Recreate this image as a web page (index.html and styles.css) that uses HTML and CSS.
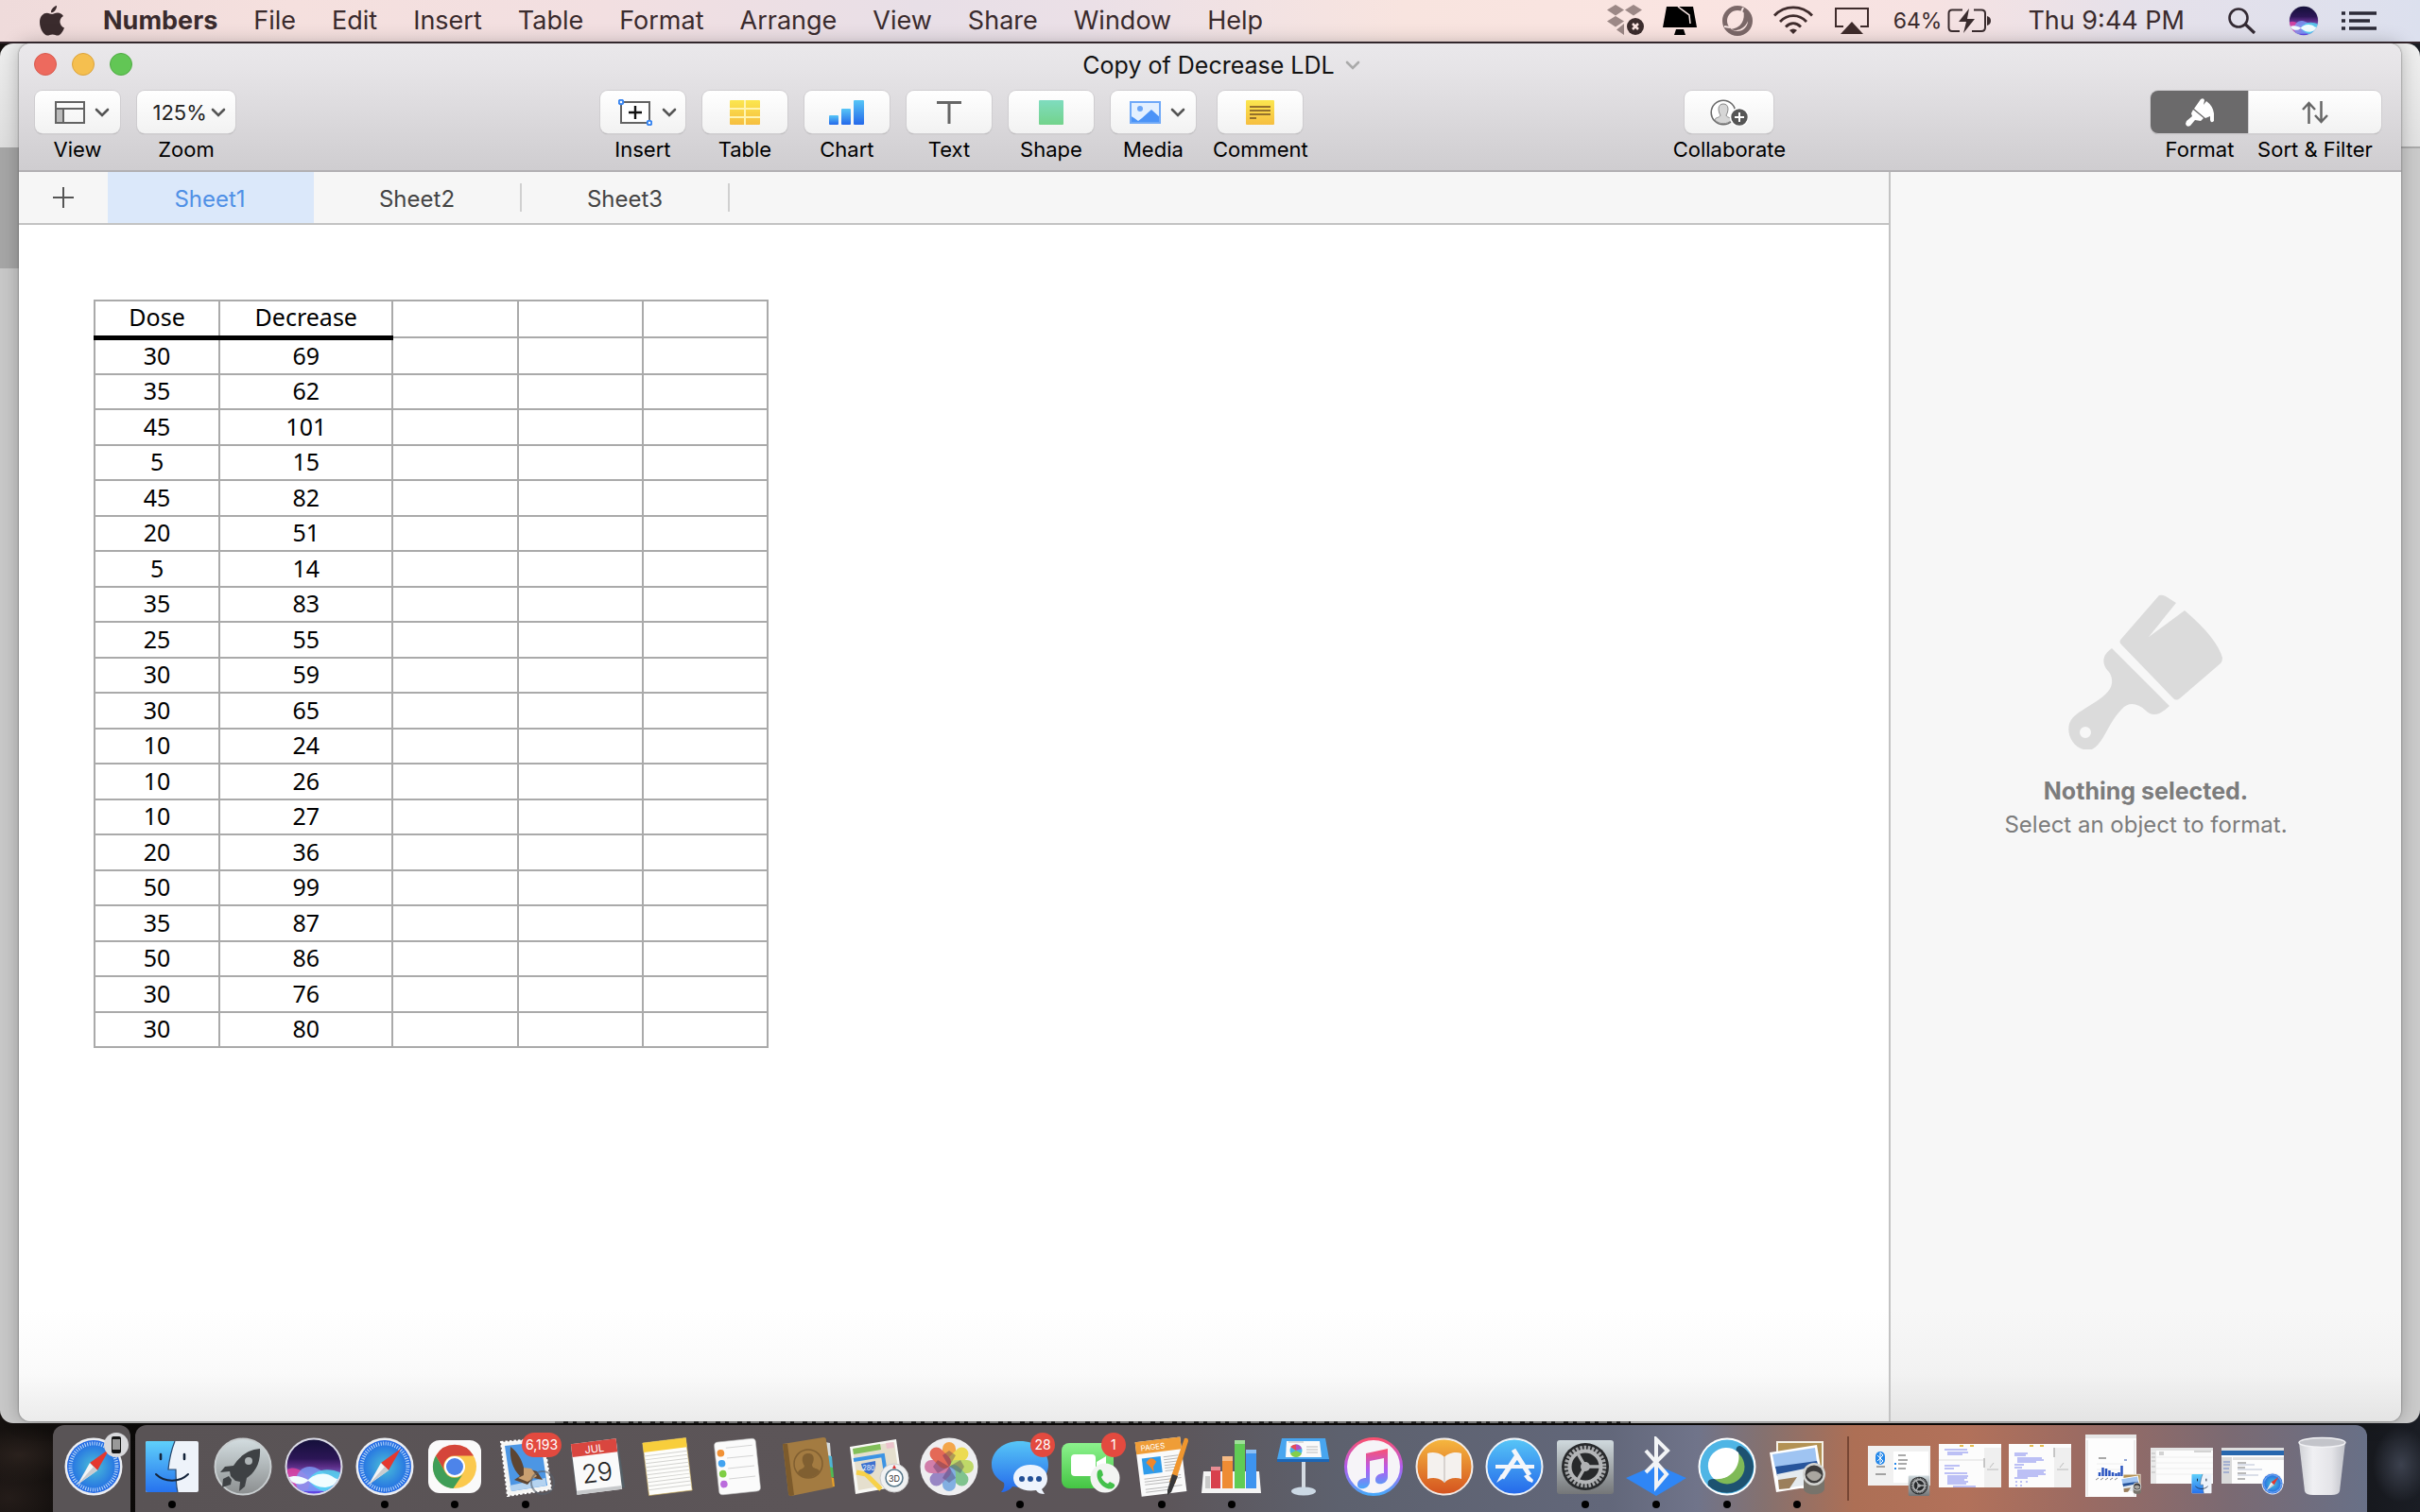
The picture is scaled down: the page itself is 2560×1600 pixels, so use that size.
FILE: index.html
```html
<!DOCTYPE html>
<html lang="en">
<head>
<meta charset="utf-8">
<title>Copy of Decrease LDL</title>
<link rel="stylesheet" href="styles.css">
</head>
<body>
<svg class="defs" aria-hidden="true">
  <defs>
    <linearGradient id="gBlue" x2="0" y2="1"><stop stop-color="#57c6f7"/><stop offset="1" stop-color="#2468ea"/></linearGradient>
    <linearGradient id="gOrange" x2="0" y2="1"><stop stop-color="#f6b83f"/><stop offset="1" stop-color="#d4521f"/></linearGradient>
    <linearGradient id="gYellow" x2="0" y2="1"><stop stop-color="#fbe64f"/><stop offset="1" stop-color="#f6be40"/></linearGradient>
    <linearGradient id="gGreen" x2="0" y2="1"><stop stop-color="#8cf28d"/><stop offset="1" stop-color="#45c544"/></linearGradient>
    <linearGradient id="gShape" x2="0" y2="1"><stop stop-color="#7fdcbf"/><stop offset="1" stop-color="#73d38b"/></linearGradient>
    <linearGradient id="gSilver" x2="0" y2="1"><stop stop-color="#d3dde0"/><stop offset="1" stop-color="#8b8e8f"/></linearGradient>
    <linearGradient id="gMetal" x2="0" y2="1"><stop stop-color="#d0dade"/><stop offset="1" stop-color="#747678"/></linearGradient>
    <linearGradient id="gFinder" x2="0" y2="1"><stop stop-color="#5fd0fa"/><stop offset="1" stop-color="#2672ee"/></linearGradient>
    <linearGradient id="gNote" x2="0" y2="1"><stop stop-color="#fa5070"/><stop offset=".5" stop-color="#b45cf0"/><stop offset="1" stop-color="#48a8fa"/></linearGradient>
    <linearGradient id="gTrash" x2="1" y2="0"><stop stop-color="#d0d1d6"/><stop offset=".3" stop-color="#f0f0f3"/><stop offset=".7" stop-color="#e4e4e8"/><stop offset="1" stop-color="#bfc1c8"/></linearGradient>
    <linearGradient id="gSiri" x2="0" y2="1"><stop stop-color="#14103a"/><stop offset=".35" stop-color="#2c1656"/><stop offset=".5" stop-color="#5a2c86"/><stop offset=".75" stop-color="#8f8af0"/><stop offset="1" stop-color="#5a3fe0"/></linearGradient>
    <radialGradient id="gSafari"><stop stop-color="#4bc0d8"/><stop offset="1" stop-color="#2066e4"/></radialGradient>
    <clipPath id="cSiri"><circle cx="32" cy="32" r="28.500"/></clipPath>

    <symbol id="chev" viewBox="0 0 16 10"><path d="M2 2l6 6 6-6" fill="none" stroke="currentColor" stroke-width="2.600" stroke-linecap="round"/></symbol>

    <symbol id="safari" viewBox="0 0 64 64">
      <circle cx="32" cy="32" r="30.500" fill="#eceef2"/><circle cx="32" cy="32" r="28" fill="url(#gSafari)"/>
      <circle cx="32" cy="32" r="24.500" fill="none" stroke="#dceeff" stroke-width="4" stroke-dasharray="1 1.565" opacity=".85"/>
      <path d="M49 13L28 28l8 8z" fill="#e4382f"/><path d="M15 51l13-23 8 8z" fill="#f4f4f4"/><path d="M15 51l17-19 4 4z" fill="#c9ccd0"/>
    </symbol>
    <symbol id="finder" viewBox="0 0 64 64">
      <rect x="4" y="5" width="56" height="54" rx="2" fill="#eef3fa"/>
      <path d="M6 5h29c-4 10-6 20-7 30h8c0 8 0 16 2 24H6q-2 0-2-2V7q0-2 2-2z" fill="url(#gFinder)"/>
      <path d="M35 5c-4 10-6 20-7 30h8c0 8 0 16 2 24" fill="none" stroke="#28486e" stroke-width="1.200"/>
      <path d="M20 19v5M45 19v5" stroke="#14243a" stroke-width="2.600" stroke-linecap="round"/>
      <path d="M15 40c9 9 25 9 34 0" fill="none" stroke="#14243a" stroke-width="2" stroke-linecap="round"/>
    </symbol>
    <symbol id="prefs" viewBox="0 0 64 64">
      <rect x="2" y="4" width="60" height="57" rx="3" fill="url(#gMetal)"/><circle cx="32" cy="32" r="25" fill="#27292b"/>
      <circle cx="32" cy="32" r="20" fill="none" stroke="#a4a6a8" stroke-width="4.500" stroke-dasharray="2.600 1.590"/>
      <circle cx="32" cy="32" r="16.500" fill="none" stroke="#b4b6b8" stroke-width="4"/><circle cx="32" cy="32" r="5" fill="#b0b2b4"/>
      <path d="M32 32h16M32 32l-8-14M32 32l-8 14" stroke="#b0b2b4" stroke-width="3.500"/>
    </symbol>
    <symbol id="preview" viewBox="0 0 64 64">
      <path d="M10 5h50v50H10z" fill="#f4f0e6"/><path d="M12 7h46v46H12z" fill="#b39254"/>
      <path d="M3 17l50-8 7 42-50 8z" fill="#fff"/><path d="M6 19l45-7 2 15-44 7z" fill="#9fc4f2"/><path d="M9 32l44-6 3 10-45 6z" fill="#27559c"/><path d="M11 40l44-9 2 18-44 7z" fill="#e4eaee"/><path d="M12 46l20-3-8 12-11 1z" fill="#9b7f5c"/>
      <path d="M39 42v14c2 7 20 7 22 0V42z" fill="#77736b"/><circle cx="50" cy="40" r="12" fill="#d3d4d2"/><circle cx="50" cy="40" r="9.500" fill="#3d3c3c"/><path d="M42 41c4-6 12-5 16 0-3 8-12 8-16 0z" fill="#a9a6a0"/>
    </symbol>
    <symbol id="siri" viewBox="0 0 64 64">
      <circle cx="32" cy="32" r="30.500" fill="#dadbe6"/><circle cx="32" cy="32" r="28.500" fill="url(#gSiri)"/>
      <g clip-path="url(#cSiri)">
        <path d="M2 36c10-6 18 0 26 10l-2 10C16 60 6 52 2 36z" fill="#ee3f9f" opacity=".75"/>
        <path d="M12 48c4-20 22-22 38-2v12H16z" fill="#7e9cf8" opacity=".8"/>
        <path d="M26 46c8-12 22-14 38-6v14c-14 8-28 6-38-8z" fill="#52dcf2" opacity=".8"/>
        <path d="M4 44c8-4 16-1 22 2 6-6 18-10 28-2 3 2 6 0 8 0v4c-8 2-10 5-18 6-8 0-12-3-18-7-7 6-16 4-22-3z" fill="#f2fdff"/>
      </g>
    </symbol>
    <symbol id="brush" viewBox="0 0 164 164">
      <path d="M96 1q3-1 7 1l11 7-29 36 38-28q34 29 40 50 0 4-2 6l-43 37q-4 3-7 0L56 53q-3-3 0-6z"/>
      <path fill-rule="evenodd" d="M46 57l61 61q-6 6-11 8-8 3-14-3c-10-9-19-9-26-1-16 17-18 35-31 42C10 168-3 152 1 137c4-14 31-20 43-37 4-7 2-15-2-19-8-9-5-18 4-24zM18 140a6 6 0 1 0 0 12 6 6 0 1 0 0-12z"/>
    </symbol>
  </defs>
</svg>

<header class="menubar">
  <nav class="menus" aria-label="Menu bar">
    <button class="apple" aria-label="Apple"><svg width="26" height="32" viewBox="0 0 26 32"><path d="M18 0c.4 3.600-3 7.500-6 7.300C11.700 4 15 .6 18 0zM13 9c1.600 0 3-1.400 6-1.400 2.400 0 4.700 1.300 6 3.400-5.300 3-4.400 10.300 1 12.400-1.200 3.200-4 8.200-7 8.200-2 0-3-1.200-5.400-1.200-2.500 0-3.600 1.200-5.500 1.200C4.600 31.600 0 25 0 17.600 0 11 4 7.700 7.600 7.700 10 7.700 11.600 9 13 9z"/></svg></button>
    <button class="app">Numbers</button><button>File</button><button>Edit</button><button>Insert</button><button>Table</button><button>Format</button><button>Arrange</button><button>View</button><button>Share</button><button>Window</button><button>Help</button>
  </nav>
  <div class="status">
    <svg width="40" height="34" viewBox="0 0 40 34"><path d="M9 0l9 5.500-9 6L0 5.500zM28 0l9 5.500-9 6-9-6zM9 12l9 5.500-9 6-9-6zM18 20v12l-8-5.500z" fill="#9c8886"/><circle cx="30" cy="23" r="9" fill="#3c2d2d"/><path d="M27 20l6 6m0-6l-6 6" stroke="#fbe6e3" stroke-width="2.500"/></svg>
    <svg class="s-display" width="36" height="32" viewBox="0 0 36 32"><path d="M4 1h28l4 22H0zM14 25h8l2 6H12z" fill="#000"/><path d="M16 1l12 9 1 9" fill="none" stroke="#f8e6e4" stroke-width="1.500"/></svg>
    <svg class="s-ring" width="34" height="34" viewBox="0 0 34 34"><circle cx="17" cy="17" r="13.500" fill="none" stroke="#7b6868" stroke-width="5"/><path d="M23 4q11 11 0 20-6 5-13 2 17-3 13-22z" fill="#7b6868"/><path d="M23 3l-2 5M3 23l6 1" stroke="#f8e6e4" stroke-width="2"/></svg>
    <svg class="s-wifi" width="42" height="32" viewBox="0 0 42 32" fill="none" stroke="#3f2c2c" stroke-width="2.800"><path d="M1 10.500C12-1 30-1 41 10.500M7 17c8-8.500 20-8.500 28 0M13 22.500c5-5 11-5 16 0"/><path d="M17 26q4-3 8 0l-4 4z" fill="#3f2c2c" stroke="none"/></svg>
    <svg class="s-air" width="38" height="30" viewBox="0 0 38 30"><path d="M10 21H2V2h34v19h-8" fill="none" stroke="#3f2c2c" stroke-width="2"/><path d="M19 16l12 13H7z" fill="#3f2c2c"/></svg>
    <span class="pct">64%</span>
    <svg class="s-batt" width="46" height="26" viewBox="0 0 46 26"><path d="M16 1.500H5q-3.500 0-3.500 3.500v15q0 4 3.500 4h8M26 24h10q4 0 4-4V5q0-3.500-4-3.500h-8" fill="none" stroke="#3a2c2e" stroke-width="2"/><path d="M23 0L12 14h8l-3 12 12-15h-8zM42 8q4 1 4 5t-4 5z" fill="#3a2c2e"/></svg>
    <time>Thu 9:44 PM</time>
    <svg class="s-find" width="30" height="28" viewBox="0 0 30 28"><circle cx="11" cy="11" r="9.500" fill="none" stroke="#332a33" stroke-width="2.600"/><path d="M18 17.500l10 9.500" stroke="#332a33" stroke-width="3.200"/></svg>
    <svg class="s-siri" width="34" height="34"><use href="#siri"/></svg>
    <svg class="s-list" width="38" height="22" viewBox="0 0 38 22"><path d="M0 3h4M8 3h29M0 11h4M8 11h22M0 19h4M8 19h29" stroke="#2b2a37" stroke-width="3.600"/></svg>
  </div>
</header>

<div class="stage">
  <main class="window">
    <header class="chrome">
      <div class="titlebar">
        <div class="lights"><button class="red" aria-label="Close"></button><button class="amber" aria-label="Minimize"></button><button class="green" aria-label="Zoom window"></button></div>
        <h1>Copy of Decrease LDL</h1>
        <svg class="tchev" width="16" height="10"><use href="#chev"/></svg>
      </div>
      <div class="toolbar">
        <div class="group">
          <button class="tool"><span class="face pop"><svg width="32" height="24" viewBox="0 0 32 24"><path d="M1 8h8v15H1z" fill="#bbb"/><path d="M1 1h30v22H1zM1 8h30M9 8v15" fill="none" stroke="#636363" stroke-width="2"/></svg><svg class="c" width="16" height="10"><use href="#chev"/></svg></span><span>View</span></button>
          <div class="tool zoom"><span class="face"><select id="zoom"><option>125%</option><option>100%</option></select><svg class="c" width="16" height="10"><use href="#chev"/></svg></span><label for="zoom">Zoom</label></div>
        </div>
        <div class="group">
          <button class="tool"><span class="face pop"><svg width="36" height="28" viewBox="0 0 36 28"><path d="M3 3h30v22H3z" fill="#fff" stroke="#636363" stroke-width="2"/><path d="M11 14h14M18 7v14" stroke="#111" stroke-width="2.400"/><g fill="#fff" stroke="#3a86f0" stroke-width="2"><circle cx="3" cy="3" r="2.300"/><circle cx="33" cy="25" r="2.300"/></g></svg><svg class="c" width="16" height="10"><use href="#chev"/></svg></span><span>Insert</span></button>
          <button class="tool"><span class="face"><svg width="32" height="26" viewBox="0 0 32 26"><rect width="32" height="26" rx="1" fill="url(#gYellow)"/><path d="M0 9h32M0 18h32M16 0v26" stroke="#fff4b0" stroke-width="2"/></svg></span><span>Table</span></button>
          <button class="tool"><span class="face"><svg width="37" height="26" viewBox="0 0 37 26" fill="url(#gBlue)"><rect y="16" width="10" height="10" rx="1"/><rect x="13" y="9" width="10" height="17" rx="1"/><rect x="26" width="11" height="26" rx="1"/></svg></span><span>Chart</span></button>
          <button class="tool"><span class="face"><svg width="26" height="24" viewBox="0 0 26 24"><path d="M0 1.500h26M13 1.500V24" stroke="#666" stroke-width="3"/></svg></span><span>Text</span></button>
          <button class="tool"><span class="face"><svg width="26" height="26"><rect width="26" height="26" rx="1" fill="url(#gShape)"/></svg></span><span>Shape</span></button>
          <button class="tool"><span class="face pop"><svg width="33" height="24" viewBox="0 0 33 24"><path d="M0 0h33v24H0z" fill="#e3f0ff"/><path d="M0 15l5 3 4 3 4-3 10-9 10 9v6H0z" fill="#4b93f7"/><circle cx="11" cy="8" r="3" fill="#6ba6f8"/><path d="M1 1h31v22H1z" fill="none" stroke="#6fa9f8" stroke-width="2"/></svg><svg class="c" width="16" height="10"><use href="#chev"/></svg></span><span>Media</span></button>
          <button class="tool"><span class="face"><svg width="30" height="26" viewBox="0 0 30 26"><rect width="30" height="26" rx="1" fill="url(#gYellow)"/><path d="M4 7h22M4 11h22M4 15h22M4 19h7" stroke="#94702c" stroke-width="2"/></svg></span><span>Comment</span></button>
        </div>
        <div class="group">
          <button class="tool"><span class="face team"><svg width="40" height="28" viewBox="0 0 40 28"><circle cx="14" cy="14" r="12.800" fill="#fff" stroke="#6a6a6a" stroke-width="1.600"/><path d="M14 5c6 0 6 7 3 12 1 3 6 2 6 5-5 5-13 5-18 0 0-3 5-2 6-5-3-5-3-12 3-12z" fill="#d6d6d6" stroke="#888"/><circle cx="31" cy="19" r="9.500" fill="#555" stroke="#fff" stroke-width="1.600"/><path d="M26 19h10M31 14v10" stroke="#fff" stroke-width="2"/></svg></span><span>Collaborate</span></button>
        </div>
        <div class="group seg">
          <button class="tool on"><span class="face"><svg width="32" height="30" viewBox="0 0 32 30" fill="#fff"><path d="M17 1q3-2 4 1l-1 5 3-4q7 5 8 13v8q-3 3-4-1v-4l-5 2L10 11zM9 12l11 9-3 3-6-1-5 6q-4 2-5-2l1-3 6-5-1-3z"/></svg></span><span>Format</span></button>
          <button class="tool wide"><span class="face"><svg width="28" height="24" viewBox="0 0 28 24" fill="none" stroke="#666" stroke-width="2.500"><path d="M7.500 24V2M1 9l6.500-7L14 9M20.500 0v22M14 15l6.500 7 6.500-7"/></svg></span><span>Sort &amp; Filter</span></button>
        </div>
      </div>
    </header>

    <div class="body">
      <section class="doc">
        <div class="tabs">
          <button class="add" aria-label="Add sheet"><svg width="22" height="22" viewBox="0 0 22 22"><path d="M0 11h22M11 0v22" stroke="#555" stroke-width="2"/></svg></button>
          <button class="tab cur">Sheet1</button><button class="tab">Sheet2</button><button class="tab">Sheet3</button>
        </div>
        <div class="canvas">
          <table>
            <colgroup><col class="n"><col class="w"><col class="n"><col class="n"><col class="n"></colgroup>
            <thead><tr><th>Dose</th><th>Decrease</th><td></td><td></td><td></td></tr></thead>
            <tbody>
              <tr><td>30</td><td>69</td><td></td><td></td><td></td></tr>
              <tr><td>35</td><td>62</td><td></td><td></td><td></td></tr>
              <tr><td>45</td><td>101</td><td></td><td></td><td></td></tr>
              <tr><td>5</td><td>15</td><td></td><td></td><td></td></tr>
              <tr><td>45</td><td>82</td><td></td><td></td><td></td></tr>
              <tr><td>20</td><td>51</td><td></td><td></td><td></td></tr>
              <tr><td>5</td><td>14</td><td></td><td></td><td></td></tr>
              <tr><td>35</td><td>83</td><td></td><td></td><td></td></tr>
              <tr><td>25</td><td>55</td><td></td><td></td><td></td></tr>
              <tr><td>30</td><td>59</td><td></td><td></td><td></td></tr>
              <tr><td>30</td><td>65</td><td></td><td></td><td></td></tr>
              <tr><td>10</td><td>24</td><td></td><td></td><td></td></tr>
              <tr><td>10</td><td>26</td><td></td><td></td><td></td></tr>
              <tr><td>10</td><td>27</td><td></td><td></td><td></td></tr>
              <tr><td>20</td><td>36</td><td></td><td></td><td></td></tr>
              <tr><td>50</td><td>99</td><td></td><td></td><td></td></tr>
              <tr><td>35</td><td>87</td><td></td><td></td><td></td></tr>
              <tr><td>50</td><td>86</td><td></td><td></td><td></td></tr>
              <tr><td>30</td><td>76</td><td></td><td></td><td></td></tr>
              <tr><td>30</td><td>80</td><td></td><td></td><td></td></tr>
            </tbody>
          </table>
        </div>
      </section>
      <aside class="inspector">
        <svg width="164" height="164" fill="#dbdbdb"><use href="#brush"/></svg>
        <strong>Nothing selected.</strong>
        <p>Select an object to format.</p>
      </aside>
    </div>
  </main>
</div>

<footer class="dockrow">
  <div class="handoff"><svg width="64" height="64"><use href="#safari"/></svg><span class="phone"><svg width="10" height="18" viewBox="0 0 10 18"><rect width="10" height="18" rx="2" fill="#151515"/><path d="M1 3h8v11H1z" fill="#999"/></svg></span></div>
  <div class="dock">
    <div class="slot run"><svg width="64" height="64"><use href="#finder"/></svg></div>
    <div class="slot"><svg width="64" height="64" viewBox="0 0 64 64"><circle cx="32" cy="32" r="29.500" fill="url(#gSilver)" stroke="#c9ced0" stroke-width="2"/><path d="M50 13C36 14 27 23 22 31l-9 1-5 6 10-1 1 5 5 5 5 1-1 10 6-5 2-9c8-5 15-15 14-31z" fill="#3e4144"/><circle cx="38" cy="26" r="4" fill="#aeb4b6"/><path d="M17 42l-6 3-1 9 9-3 1-5z" fill="#3e4144"/></svg></div>
    <div class="slot"><svg width="64" height="64"><use href="#siri"/></svg></div>
    <div class="slot run"><svg width="64" height="64"><use href="#safari"/></svg></div>
    <div class="slot run"><svg width="64" height="64" viewBox="0 0 64 64"><rect x="4" y="4" width="56" height="56" rx="12" fill="#fafafa"/><circle cx="32" cy="32" r="23" fill="#fbc94e"/><path d="M12 20.500A23 23 0 0 1 52 20.500H32A11.500 11.500 0 0 0 22 38z" fill="#d5463a"/><path d="M12 20.500A23 23 0 0 0 30.500 55L42 38a11.500 11.500 0 0 1-20 0z" fill="#3f9e58"/><circle cx="32" cy="32" r="11" fill="#fff"/><circle cx="32" cy="32" r="9" fill="#4d84ea"/></svg></div>
    <div class="slot run"><svg width="64" height="64" viewBox="0 0 64 64"><path d="M6 6l45-4 8 54-46 7z" fill="#f6f6f4" stroke="#fff" stroke-width="2" stroke-dasharray="2.500 2"/><path d="M10 10l38-4 7 46-38 6z" fill="#4c96e4"/><path d="M15 52l38-8 1 8-37 6z" fill="#b4d3f0"/><path d="M16 11c8 6 12 14 14 22l14 4 6 9-10-2-6 7-14-5 6-4c-8-8-11-19-10-31z" fill="#5d4532"/><path d="M30 33l8 1 6 8-10 6-10-4 6-3z" fill="#c9a071"/><circle cx="50" cy="49" r="12" fill="none" stroke="#57606c" stroke-width="2" opacity=".6"/></svg><span class="badge">6,193</span></div>
    <div class="slot"><svg width="64" height="64" viewBox="0 0 64 64"><path d="M5 14l50-6 7 46-51 8z" fill="#545f66"/><g transform="rotate(-7 32 32)"><rect x="8" y="5" width="48" height="54" fill="#fafafa"/><path d="M8 5h48v14H8z" fill="#d9463f"/><path d="M8 55h48v4H8z" fill="#c7c9cb"/><text x="32" y="17" class="jul">JUL</text><text x="32" y="48" class="day">29</text></g></svg></div>
    <div class="slot"><svg width="64" height="64" viewBox="0 0 64 64"><g transform="rotate(-7 32 32)"><rect x="9" y="4" width="46" height="56" fill="#fdfdfb" stroke="#c9ab54" stroke-width=".6"/><path d="M9 4h46v10H9z" fill="#f8ce3c"/><path d="M9 18h46M9 22h46M9 26h46M9 30h46M9 34h46M9 38h46M9 42h46M9 46h46M9 50h46M9 54h46" stroke="#d3d3d0"/></g></svg></div>
    <div class="slot"><svg width="64" height="64" viewBox="0 0 64 64"><g transform="rotate(-6 32 32)"><rect x="10" y="4" width="44" height="56" rx="4" fill="#fbfbfb" stroke="#b8b8b8" stroke-width=".6"/><path d="M22 22h28M22 33h28M22 44h28M22 11h28" stroke="#d4d4d4"/><circle cx="16" cy="16" r="3.800" fill="#f19135"/><circle cx="16" cy="27" r="3.800" fill="#42a3f0"/><circle cx="16" cy="38" r="3.800" fill="#7fce45"/><circle cx="16" cy="49" r="3.800" fill="#bb6cdc"/></g></svg></div>
    <div class="slot"><svg width="64" height="64" viewBox="0 0 64 64"><path d="M50 6l5 1 1 14-4 1z" fill="#d7dcdc"/><path d="M52 20l5 1 1 12-4 1z" fill="#4fb4d6"/><path d="M54 32l4 1 1 10-4 1z" fill="#4dbc55"/><path d="M55 43l4 1 1 9-6 1z" fill="#e5a02a"/><path d="M5 8l43-7q3 0 3 3l7 50-44 9q-3 0-3-3z" fill="#a37b41"/><path d="M5 8l5 0 7 54-3 1q-3 0-3-3z" fill="#7d5b2c"/><circle cx="32" cy="29" r="15" fill="none" stroke="#805f31" stroke-width="1.500"/><path d="M32 18c8 0 6 9 4 12 0 5 7 3 8 7-6 8-17 9-23 2 0-5 7-4 7-8-3-4-4-13 4-13z" fill="#805f31"/></svg></div>
    <div class="slot"><svg width="64" height="64" viewBox="0 0 64 64"><path d="M1 11l49-8 7 49-50 9z" fill="#f8f8f5"/><path d="M4 13l44-7 6 43-44 8z" fill="#e5dfce"/><path d="M4 13l29-5 1 6-29 5z" fill="#82c05a"/><path d="M39 7l8-1 1 6-8 1z" fill="#ecc3cc"/><path d="M5 25l31-5 4 26" fill="none" stroke="#3c94e4" stroke-width="4"/><path d="M8 38l10 2 16 16" fill="none" stroke="#f7d14a" stroke-width="5"/><path d="M13 29l15-3c1 9-2 13-6 14-5-1-8-5-9-11z" fill="#3d71cf"/><text x="21" y="36" class="i280">280</text><circle cx="48" cy="44" r="15" fill="#f0f1f2" stroke="#ccc"/><circle cx="48" cy="44" r="9" fill="#fff" stroke="#56778a" stroke-width="1.500"/><path d="M48 30l2 4h-4z" fill="#d33"/><text x="48" y="48" class="d3">3D</text></svg></div>
    <div class="slot"><svg width="64" height="64" viewBox="0 0 64 64"><circle cx="32" cy="32" r="30.500" fill="#eeeef0"/><g opacity=".86"><rect x="25" y="6" width="14" height="26" rx="7" fill="#f49b31"/><rect x="25" y="6" width="14" height="26" rx="7" fill="#ecd93a" transform="rotate(45 32 32)"/><rect x="25" y="6" width="14" height="26" rx="7" fill="#b8d552" transform="rotate(90 32 32)"/><rect x="25" y="6" width="14" height="26" rx="7" fill="#6fbd7e" transform="rotate(135 32 32)"/><rect x="25" y="6" width="14" height="26" rx="7" fill="#71a5df" transform="rotate(180 32 32)"/><rect x="25" y="6" width="14" height="26" rx="7" fill="#8b75bd" transform="rotate(225 32 32)"/><rect x="25" y="6" width="14" height="26" rx="7" fill="#cd6c9f" transform="rotate(270 32 32)"/><rect x="25" y="6" width="14" height="26" rx="7" fill="#e3543f" transform="rotate(315 32 32)"/></g><path d="M32 32l-7-12 7-5 7 5zM32 32l12 7 4-7-4-7zM32 32l-12-7-5 7 5 7zM32 32l-7 12 7 5 7-5z" fill="#402858" opacity=".35"/></svg></div>
    <div class="slot run"><svg width="64" height="64" viewBox="0 0 64 64"><path d="M32 5c17 0 30 10 30 25S49 54 32 54l-8-1c-3 4-8 6-12 6 3-3 4-7 3-10C7 45 2 38 2 30 2 15 15 5 32 5z" fill="url(#gBlue)"/><path d="M43 30c11 0 18 6 18 15 0 4-2 8-6 11l3 5c-4 0-7-1-9-4-14 2-24-4-24-13 0-8 8-14 18-14z" fill="#eef4fd"/><g fill="#234f95"><circle cx="34" cy="45" r="3"/><circle cx="43" cy="45" r="3"/><circle cx="52" cy="45" r="3"/></g></svg><span class="badge">28</span></div>
    <div class="slot"><svg width="64" height="64" viewBox="0 0 64 64"><rect x="1" y="7" width="55" height="48" rx="8" fill="url(#gGreen)"/><rect x="11" y="19" width="26" height="23" rx="4" fill="#fff"/><path d="M38 27l10-6v18l-10-6z" fill="#fff"/><circle cx="47" cy="44" r="15.500" fill="#f2f4f2"/><path d="M39 37q3-4 5 0l1 4-2 2c1 3 4 6 7 7l2-2 4 2q3 2-1 5c-8 3-19-8-16-18z" fill="#43c14b"/></svg><span class="badge">1</span></div>
    <div class="slot run"><svg width="64" height="64" viewBox="0 0 64 64"><g transform="rotate(-7 32 32)"><rect x="7" y="3" width="48" height="58" fill="#fafafa"/><path d="M7 3h48v13H7z" fill="#ef9d37"/><text x="25" y="13" class="pg">PAGES</text><path d="M12 21h20v17H12z" fill="#2e9bea"/><path d="M16 26q6-8 11 0l-4 5v6l-3-6z" fill="#f0862c"/><path d="M35 22h16M35 25h16M35 28h16M35 31h16M35 34h16M35 37h16M12 43h39M12 46h39M12 49h28M12 54h39M12 57h28" stroke="#b9b9b9"/></g><path d="M56 2q4-1 4 3L46 50l-6-2z" fill="#f0962e"/><path d="M43 40l6 2-7 17-4 3 0-5z" fill="#38383a"/></svg></div>
    <div class="slot run"><svg width="64" height="64" viewBox="0 0 64 64"><path d="M2 37h59l2 23H0z" fill="#f4f4f4"/><path d="M4 42h5v13H4z" fill="#c9c9c9"/><path d="M10 32h10v23H10z" fill="#d8404c"/><path d="M22 21h11v34H22z" fill="#ee8c34"/><path d="M35 4h11v51H35z" fill="#60cc55"/><path d="M47 14h11v41H47z" fill="#3e94ef"/><path d="M10 32h10v4H10zM22 21h11v5H22zM35 4h11v4H35zM47 14h11v4H47z" fill="#fff" opacity=".4"/></svg></div>
    <div class="slot"><svg width="64" height="64" viewBox="0 0 64 64"><path d="M31 26h4v34h-4z" fill="#d4dbe2"/><ellipse cx="33" cy="58" rx="13" ry="4.500" fill="#cbd8e4"/><path d="M10 2h46l4 22H5z" fill="#48a5ef"/><path d="M5 24h55v3H5z" fill="#1c66b6"/><path d="M15 5h35l2 17H14z" fill="#fafafa"/><circle cx="25" cy="15" r="6.500" fill="#46b3e8"/><path d="M25 15V8.500a6.500 6.500 0 0 1 6 4.500z" fill="#b14fc0"/><path d="M25 15l6 3a6.500 6.500 0 0 1-12 0z" fill="#83ce4c"/><path d="M25 15l-6-4 3-2 3-.5z" fill="#e64b57"/><path d="M36 11h12M36 14h12M36 17h12M17 6h16" stroke="#bbb"/></svg></div>
    <div class="slot"><svg width="64" height="64" viewBox="0 0 64 64"><circle cx="32" cy="32" r="29.500" fill="#f6f4f8" stroke="url(#gNote)" stroke-width="3"/><path d="M24 18l23-5v30c0 8-13 10-13 3 0-6 6-7 9-7V23l-15 3v22c0 8-13 10-13 3 0-6 6-7 9-7z" fill="url(#gNote)"/></svg></div>
    <div class="slot"><svg width="64" height="64" viewBox="0 0 64 64"><circle cx="32" cy="32" r="29.500" fill="url(#gOrange)" stroke="#f2ece8" stroke-width="2"/><path d="M32 22c-4-5-13-6-18-4v27c6-2 14-1 18 4 4-5 12-6 18-4V18c-5-2-14-1-18 4z" fill="#f4f1ee"/><path d="M32 22v27" stroke="#bbb6b2"/></svg></div>
    <div class="slot"><svg width="64" height="64" viewBox="0 0 64 64"><circle cx="32" cy="32" r="29.500" fill="url(#gBlue)" stroke="#eef3f8" stroke-width="2"/><path d="M12 32h41" stroke="#f4f6fa" stroke-width="4"/><path d="M31 14l17 27M35 20L19 44" stroke="#f4f6fa" stroke-width="5"/><path d="M46 40l6 6-1 3-5-2-4-5zM18 40l-5 9 9-6z" fill="#f4f6fa"/></svg></div>
    <div class="slot run"><svg width="64" height="64"><use href="#prefs"/></svg></div>
    <div class="slot run"><svg width="64" height="64" viewBox="0 0 64 64"><path d="M32 30l32 14-32 19L0 44z" fill="#2f86f5"/><path d="M21 15l22 25-11 13V3l12 12-23 23" fill="none" stroke="#f2f4f6" stroke-width="4"/></svg></div>
    <div class="slot run"><svg width="64" height="64" viewBox="0 0 64 64"><circle cx="32" cy="32" r="30.500" fill="#fff"/><circle cx="32" cy="32" r="28.500" fill="#4fb5e5"/><path d="M46 10a26 26 0 0 1 14 22A28.500 28.500 0 0 1 12 52q-2-7 6-7l24-27q-2-8 4-8z" fill="#1d5271"/><circle cx="32" cy="32" r="18.500" fill="#7fba57"/><path d="M44 17c3 14-8 30-26 28A18.500 18.500 0 0 1 44 17z" fill="#fff"/></svg></div>
    <div class="slot run"><svg width="64" height="64"><use href="#preview"/></svg></div>
    <div class="sep"></div>
    <div class="slot"><div class="mini m1"><svg width="66" height="42" viewBox="0 0 66 42"><path d="M0 0h66v42H0z" fill="#f1f1f1"/><path d="M27 6h37v33H27z" fill="#fff"/><rect x="8" y="6" width="10" height="14" rx="5" fill="#2588ea"/><path d="M10 10l6 6-3 3V7l3 3-6 6" fill="none" stroke="#fff"/><path d="M9 22h9M8 30h11M32 10h8M32 15h10M32 19h9M32 24h8" stroke="#555"/><path d="M28 19h2M28 24h2" stroke="#2588ea" stroke-width="2"/></svg><svg class="tag" width="24" height="24"><use href="#prefs"/></svg></div></div>
    <div class="slot"><div class="mini"><svg width="66" height="46" viewBox="0 0 66 46"><path d="M0 0h66v46H0z" fill="#fcfcfc"/><path d="M48 4h18v42H48z" fill="#efefef"/><path d="M6 6h24M9 9h22M9 11h16M6 23h16M6 26h10M6 31h24M9 34h22M9 36h21M9 38h18M9 40h22M9 42h20M15 45h24" stroke="#7c84ee"/><path d="M0 17h47" stroke="#ddd"/><path d="M48 15v10" stroke="#999"/><path d="M22 2h4M33 2h4" stroke="#e5bc4c" stroke-width="2"/><path d="M54 25l4-5M51 27h12" stroke="#bbb"/></svg></div></div>
    <div class="slot"><div class="mini"><svg width="66" height="46" viewBox="0 0 66 46"><path d="M0 0h66v46H0z" fill="#fcfcfc"/><path d="M48 4h18v42H48z" fill="#efefef"/><path d="M6 10h14M6 12h12M9 15h26M9 17h28M9 19h20M6 22h10M6 25h8M9 28h30M9 30h28M9 32h30M9 34h22M6 36h14M7 40h2M12 40h2M18 40h2M7 44h2M12 44h2" stroke="#7c84ee"/><path d="M48 4v10" stroke="#999"/><path d="M22 2h4M33 2h4" stroke="#e5bc4c" stroke-width="2"/><path d="M54 25l4-5M51 27h12" stroke="#bbb"/></svg></div></div>
    <div class="slot"><div class="mini m4"><svg width="54" height="66" viewBox="0 0 54 66"><path d="M0 0h54v66H0z" fill="#fdfdfd"/><path d="M0 0h54v4H0z" fill="#e7e7e7"/><path d="M2 6v59M52 6v59" stroke="#ddd"/><path d="M14 25h8" stroke="#555"/><path d="M41 27h3" stroke="#2c56b0"/><path d="M12 31h28M12 37h28" stroke="#eee"/><path d="M15 44v-4M18.500 44v-9M22 44v-8M25.500 44v-6M29 44v-4M32.500 44v-3M35.500 44v-4M38.500 44V33" stroke="#2c56c0" stroke-width="2.500"/><path d="M11 48l3-2M16 48l3-2M21 48l3-2M26 48l3-2M31 48l3-2" stroke="#888"/></svg><svg class="tag" width="24" height="24"><use href="#preview"/></svg></div></div>
    <div class="slot"><div class="mini m5"><svg width="66" height="38" viewBox="0 0 66 38"><path d="M0 0h66v38H0z" fill="#fcfcfc"/><path d="M0 0h66v3H0z" fill="#e3e3e3"/><path d="M0 3h6v35H0z" fill="#eaeaea"/><path d="M9 5h5M9 7h5M46 4h18" stroke="#aaa"/><path d="M6 10h60M6 16h60M6 22h60M6 28h60" stroke="#eee"/><path d="M1 6h4M1 10h4M1 14h4M1 20h4M1 26h4" stroke="#bbb"/></svg><svg class="tag" width="24" height="24"><use href="#finder"/></svg></div></div>
    <div class="slot"><div class="mini m5"><svg width="66" height="38" viewBox="0 0 66 38"><path d="M0 0h66v38H0z" fill="#fdfdfd"/><path d="M0 0h66v3H0z" fill="#ddd"/><path d="M0 3h66v5H0z" fill="#2767ae"/><path d="M0 10h11v28H0z" fill="#dadada"/><path d="M12 10h54v3H12z" fill="#e1e1e1"/><path d="M2 15h7M2 18h7M2 22h6M2 26h6" stroke="#7188c8"/><path d="M17 16h9M17 21h8M17 27h9M17 33h8" stroke="#777"/><path d="M17 18h18M17 23h26M17 29h22" stroke="#b9c1d4"/></svg><svg class="tag" width="24" height="24"><use href="#safari"/></svg></div></div>
    <div class="slot"><svg width="64" height="64" viewBox="0 0 64 64"><path d="M7 6l6 52q1 4 9 4h19q8 0 9-4l6-52z" fill="url(#gTrash)"/><ellipse cx="31.500" cy="6.500" rx="24.500" ry="5" fill="#c3c4ca" stroke="#f1f1f4" stroke-width="1.500"/></svg></div>
  </div>
</footer>
</body>
</html>
```
FILE: styles.css
```css
* { box-sizing: border-box; }
body {
  margin: 0;
  min-height: 100vh;
  display: flex;
  flex-direction: column;
  font-family: Inter, "Liberation Sans", sans-serif;
  color: #000;
  background:
    radial-gradient(60px 30px at 20px calc(100% - 60px), #2a211d, transparent),
    radial-gradient(60px 40px at 10px calc(100% - 15px), #241c19, transparent),
    radial-gradient(30px 40px at calc(100% - 20px) calc(100% - 50px), #3c414e, transparent),
    linear-gradient(90deg, #15110f, #0b0908 6%, #0b0908 90%, #1a1d24);
}
button, select { font: inherit; color: inherit; border: 0; padding: 0; margin: 0; background: none; }
svg { display: block; flex: none; }
.defs { position: absolute; width: 0; height: 0; }

/* menu bar */
.menubar {
  height: 46px;
  flex: none;
  display: flex;
  justify-content: space-between;
  align-items: center;
  padding: 0 45px 0 42px;
  border-bottom: 2px solid #33242b;
  background: linear-gradient(90deg, #efdbdb, #f5e0de 12%, #f2dfe1 25%, #e8dfe7 38%, #ebe0e7 45%, #f8e4df 58%, #fae4e1 70%, #f6e2e2 80%, #e6e1ea 88%, #dce0ee);
  color: #3a2b2d;
  font-size: 27px;
  line-height: 44px;
}
.menus { display: flex; gap: 38px; }
.apple { display: flex; align-items: center; margin-right: 3px; }
.apple svg { fill: #3a2b2d; }
.app { font-weight: 700; }
.status { display: flex; align-items: center; }
.s-display { margin-left: 19px; }
.s-ring { margin-left: 26px; }
.s-wifi { margin-left: 21px; }
.s-air { margin-left: 22px; }
.pct { margin-left: 25px; font-size: 23px; }
.s-batt { margin-left: 6px; }
.status time { margin-left: 39px; }
.s-find { margin-left: 46px; }
.s-siri { margin-left: 33px; }
.s-list { margin-left: 23px; }

/* windows behind show at the edges */
.stage {
  flex: 1;
  display: flex;
  margin-bottom: 2px;
  padding: 0 20px 2px;
  border-radius: 14px;
  background:
    repeating-linear-gradient(90deg, #888 0 9px, #222 9px 14px, #888 14px 19px, #222 19px 23px) 587px bottom / 1138px 2px no-repeat,
    linear-gradient(#eee, #dedede 110px, #a6a6a6 110px, #a6a6a6 238px, #c8c8c8 238px) left / 50% 100% no-repeat,
    linear-gradient(#f0f0f0, #e2e2e2 109px, #aaa 109px, #aaa 111px, #cbcbcb 111px) right / 50% 100% no-repeat;
}
.window {
  flex: 1;
  display: flex;
  flex-direction: column;
  border-radius: 12px;
  overflow: hidden;
  box-shadow: 0 0 2px #555, 0 0 20px rgba(0, 0, 0, .25);
}
.chrome {
  background: linear-gradient(#eae8eb, #e6e4e7 20%, #cfcdd0);
  border-bottom: 2px solid #b2b0b3;
  padding-bottom: 8px;
}
.titlebar { position: relative; display: flex; justify-content: center; align-items: center; gap: 11px; padding-left: 24px; height: 46px; }
.titlebar h1 { margin: 0; font-size: 25px; font-weight: 400; line-height: 32px; color: #111; }
.tchev { color: #aaa; }
.lights { position: absolute; left: 16px; top: 10px; display: flex; gap: 16px; }
.lights button { width: 24px; height: 24px; border-radius: 50%; border: 1px solid; }
.lights .red { background: #ed6a5e; border-color: #d85a4e; }
.lights .amber { background: #f5bf4f; border-color: #dba33c; }
.lights .green { background: #62c655; border-color: #51ab45; }

.toolbar { display: flex; justify-content: space-between; padding: 4px 21px 0 17px; }
.group { display: flex; gap: 18px; }
.tool { display: flex; flex-direction: column; align-items: center; gap: 3px; font-size: 22px; line-height: 28px; }
.face {
  display: flex;
  justify-content: center;
  align-items: center;
  gap: 10px;
  width: 90px;
  height: 45px;
  border-radius: 8px;
  background: linear-gradient(#fff, #f2f2f2);
  box-shadow: 0 0 0 1px #cfcdd0, 0 1px 1px #999;
}
.face .c { color: #555; }
.pop { padding-left: 10px; }
.team { width: 94px; }
.zoom .face { width: 104px; gap: 2px; padding-left: 6px; }
.zoom select { appearance: none; color: #222; font-size: 22px; }
.seg { gap: 0; }
.on .face { width: 104px; border-radius: 8px 0 0 8px; background: #6b6a6b; }
.wide .face { width: 140px; border-radius: 0 8px 8px 0; }

.body { flex: 1; display: flex; }
.doc { flex: 1; display: flex; flex-direction: column; background: linear-gradient(#fff calc(100% - 120px), #fafafa calc(100% - 50px), #ebebeb); }
.tabs { display: flex; height: 56px; background: #f6f6f6; border-bottom: 2px solid #c3c3c3; font-size: 24px; color: #444; }
.add { width: 94px; display: flex; justify-content: center; align-items: center; }
.tab { width: 220px; padding: 2px 2px 0 0; background: linear-gradient(#d0d0d0, #d0d0d0) right / 2px 30px no-repeat; }
.tab.cur { width: 218px; background: #dbe8fa; color: #4f90e6; }
.canvas { padding: 79px; }
table { table-layout: fixed; width: 714px; border-collapse: collapse; font: 25px/28px "Noto Sans", sans-serif; text-align: center; }
.n { width: 132px; }
.w { width: 183px; }
th, td { border: 2px solid #aaa; padding: 0 0 3px; font-weight: 400; }
thead tr { height: 39px; }
tbody tr { height: 37px; }
tbody tr:nth-child(odd) { height: 38px; }
tbody tr:first-child { height: 39px; }
th { border-bottom: 5px solid #000; }

.inspector {
  width: 542px;
  display: flex;
  flex-direction: column;
  align-items: center;
  padding-top: 447px;
  border-left: 2px solid #c3c3c3;
  background: linear-gradient(#f7f7f7 calc(100% - 120px), #f2f2f2 calc(100% - 50px), #e4e4e4);
  color: #7c7c7c;
  font-size: 24px;
  line-height: 36px;
}
.inspector strong { margin-top: 26px; font-size: 25px; }
.inspector p { margin: 0; }

/* dock */
.dockrow { display: flex; flex: none; height: 92px; gap: 5px; padding: 0 56px; }
.handoff { position: relative; width: 82px; padding: 12px 0 0 11px; border-radius: 12px 12px 0 0; background: #595456; }
.phone { position: absolute; right: 2px; top: 8px; width: 26px; height: 26px; border-radius: 50%; background: #d9d9dc; display: flex; justify-content: center; align-items: center; }
.dock {
  flex: 1;
  display: flex;
  padding: 0 9px 0 2px;
  border-radius: 12px 12px 0 0;
  background: linear-gradient(90deg, #595355, #5c5558 30%, #5c5559 46%, #5d616e 54%, #62677a 66%, #70748a 70%, #85716f 73%, #ad6f55 77%, #b2715a 82%, #9c6b62 87%, #7a6a73 94%, #687087);
}
.slot { flex: 1; position: relative; display: flex; flex-direction: column; align-items: center; padding-top: 12px; }
.run::after { content: ""; width: 8px; height: 8px; margin-top: 4px; border-radius: 50%; background: #000; }
.sep { width: 33px; padding: 12px 16px 12px 15px; }
.sep::before { content: ""; display: block; width: 2px; height: 68px; background: #774634; }
.badge { position: absolute; left: 50%; top: 8px; min-width: 26px; height: 26px; padding: 0 4px; border-radius: 13px; background: #e34a3f; color: #fff; font-size: 14px; line-height: 26px; text-align: center; margin-left: 11px; }
.run:nth-child(6) .badge { margin-left: -4px; }
.mini { position: relative; margin-top: 8px; }
.m1 { margin-top: 10px; }
.m4 { margin-top: -2px; }
.m5 { margin-top: 12px; }
.tag { position: absolute; right: 0; bottom: -12px; }
.m4 .tag { right: -6px; bottom: 2px; }
.jul, .day, .i280, .d3, .pg { text-anchor: middle; font-family: Inter, sans-serif; }
.jul { font-size: 11px; fill: #fff; }
.day { font-size: 27px; fill: #222; font-weight: 300; }
.i280 { font-size: 7px; fill: #fff; }
.d3 { font-size: 9px; fill: #333; }
.pg { font-size: 8px; fill: #fff; }
```
